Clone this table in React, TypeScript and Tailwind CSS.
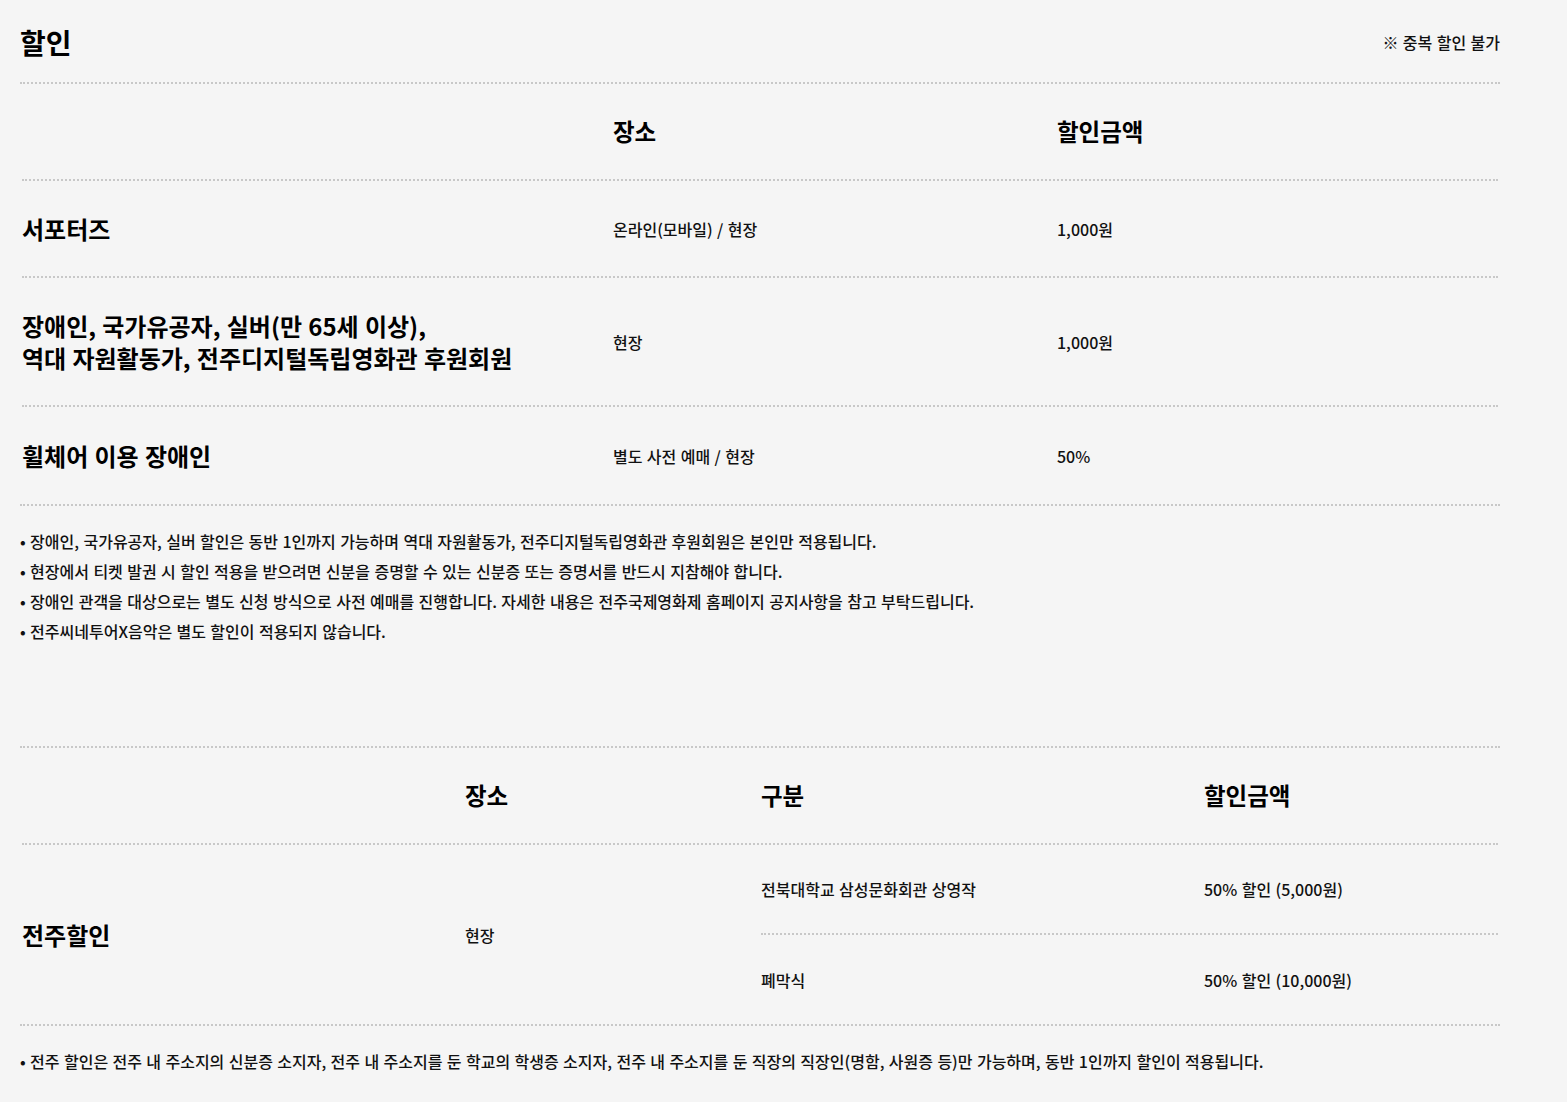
import React from "react";

const line = "border-b-2 border-dotted border-[#c8c8c8]";

export default function App() {
  const notes1 = [
    "장애인, 국가유공자, 실버 할인은 동반 1인까지 가능하며 역대 자원활동가, 전주디지털독립영화관 후원회원은 본인만 적용됩니다.",
    "현장에서 티켓 발권 시 할인 적용을 받으려면 신분을 증명할 수 있는 신분증 또는 증명서를 반드시 지참해야 합니다.",
    "장애인 관객을 대상으로는 별도 신청 방식으로 사전 예매를 진행합니다. 자세한 내용은 전주국제영화제 홈페이지 공지사항을 참고 부탁드립니다.",
    "전주씨네투어X음악은 별도 할인이 적용되지 않습니다.",
  ];
  return (
    <div
      className="min-h-[1102px] w-full bg-[#f5f5f5] text-[#111] [word-spacing:0.05em]"
      style={{ fontFamily: '"Noto Sans CJK KR", "Noto Sans", sans-serif' }}
    >
      <div className="w-[1480px] ml-[20px]">
        {/* Title */}
        <div className={`h-[84px] flex items-center justify-between pt-[1px] ${line}`}>
          <h2 className="text-[28px] font-bold leading-none text-black">할인</h2>
          <span className="text-[16px] font-medium">※ 중복 할인 불가</span>
        </div>

        {/* Table 1 */}
        <div className="border-b-2 border-dotted border-[#c8c8c8]">
          <div className={`mx-[2px] h-[97px] flex items-center pt-[1px] ${line}`}>
            <div className="w-[591px]" />
            <div className="w-[444px] text-[23.5px] font-bold text-black">장소</div>
            <div className="flex-1 text-[23.5px] font-bold text-black">할인금액</div>
          </div>
          <div className={`mx-[2px] h-[97px] flex items-center ${line}`}>
            <div className="w-[591px] text-[24px] font-bold text-black">서포터즈</div>
            <div className="w-[444px] text-[16px] font-medium">온라인(모바일) / 현장</div>
            <div className="flex-1 text-[16px] font-medium">1,000원</div>
          </div>
          <div className={`mx-[2px] h-[129px] flex items-center ${line}`}>
            <div className="w-[591px] text-[24px] font-bold leading-[32px] text-black">
              <div>장애인, 국가유공자, 실버(만 65세 이상),</div>
              <div>역대 자원활동가, 전주디지털독립영화관 후원회원</div>
            </div>
            <div className="w-[444px] text-[16px] font-medium">현장</div>
            <div className="flex-1 text-[16px] font-medium">1,000원</div>
          </div>
          <div className="mx-[2px] h-[97px] flex items-center">
            <div className="w-[591px] text-[24px] font-bold text-black">휠체어 이용 장애인</div>
            <div className="w-[444px] text-[16px] font-medium">별도 사전 예매 / 현장</div>
            <div className="flex-1 text-[16px] font-medium">50%</div>
          </div>
        </div>

        <ul className="mt-[20px] flex flex-col">
          {notes1.map((n) => (
            <li key={n} className="text-[16px] font-medium leading-[30px]">
              • {n}
            </li>
          ))}
        </ul>

        {/* Table 2 */}
        <div className="mt-[100px] border-t-2 border-b-2 border-dotted border-[#c8c8c8]">
          <div className={`mx-[2px] h-[97px] flex items-center pt-[1px] ${line}`}>
            <div className="w-[443px]" />
            <div className="w-[296px] text-[23.5px] font-bold text-black">장소</div>
            <div className="w-[443px] text-[23.5px] font-bold text-black">구분</div>
            <div className="flex-1 text-[23.5px] font-bold text-black">할인금액</div>
          </div>
          <div className="mx-[2px] h-[179px] flex items-center">
            <div className="w-[443px] text-[24px] font-bold text-black">전주할인</div>
            <div className="w-[296px] text-[16px] font-medium">현장</div>
            <div className="flex-1 flex flex-col h-full">
              <div className={`h-[90px] flex items-center ${line}`}>
                <div className="w-[443px] text-[16px] font-medium">전북대학교 삼성문화회관 상영작</div>
                <div className="flex-1 text-[16px] font-medium">50% 할인 (5,000원)</div>
              </div>
              <div className="flex-1 flex items-center">
                <div className="w-[443px] text-[16px] font-medium">폐막식</div>
                <div className="flex-1 text-[16px] font-medium">50% 할인 (10,000원)</div>
              </div>
            </div>
          </div>
        </div>

        <p className="mt-[20px] text-[16px] font-medium leading-[30px]">
          • 전주 할인은 전주 내 주소지의 신분증 소지자, 전주 내 주소지를 둔 학교의 학생증 소지자, 전주 내 주소지를 둔 직장의 직장인(명함, 사원증 등)만 가능하며, 동반 1인까지 할인이 적용됩니다.
        </p>
      </div>
    </div>
  );
}
